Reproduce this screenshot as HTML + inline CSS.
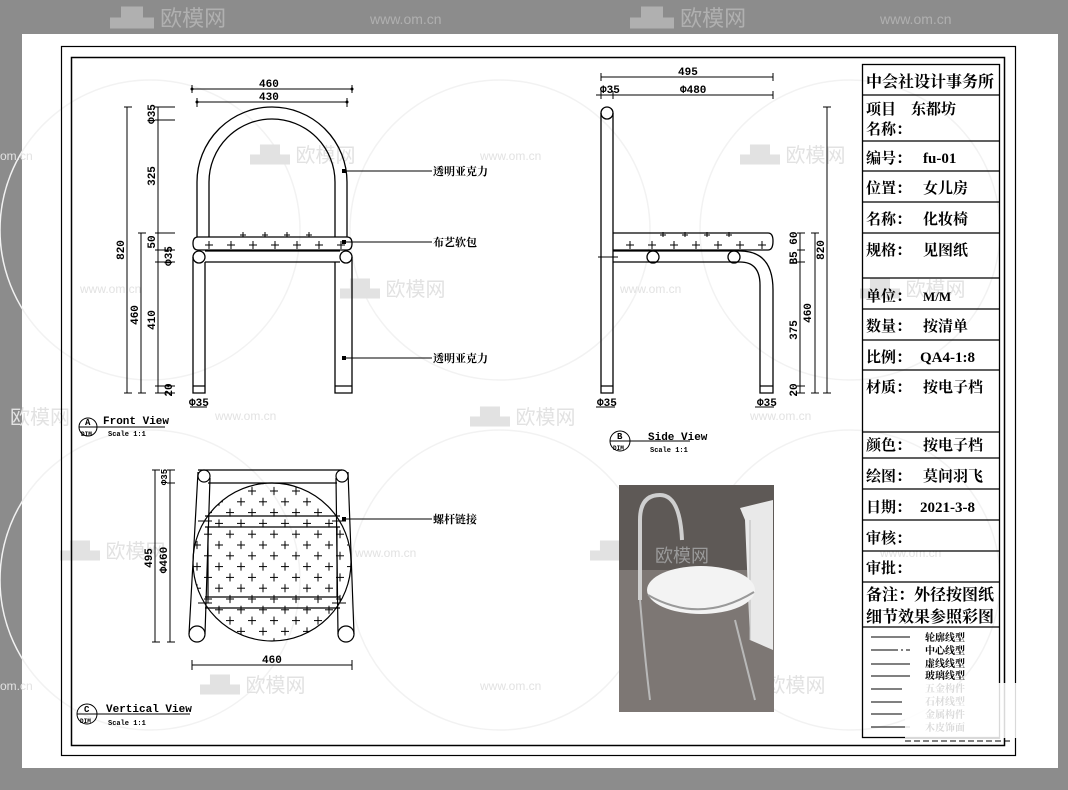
<!DOCTYPE html>
<html><head><meta charset="utf-8"><style>
html,body{margin:0;padding:0;background:#8c8c8c;width:1068px;height:790px;overflow:hidden}
svg{display:block}
.cn{font-family:"Liberation Serif","Noto Serif CJK SC",serif;font-weight:bold;font-size:15px;fill:#000}
.m{font-family:"Liberation Mono","Noto Sans CJK SC",monospace;font-weight:bold;fill:#000}
.wm{font-family:"Liberation Sans","Noto Sans CJK SC",sans-serif;fill:#e2e2e2}
</style></head><body>
<svg width="1068" height="790" viewBox="0 0 1068 790" xmlns="http://www.w3.org/2000/svg">
<defs>
<pattern id="cr" x="252" y="491" width="22" height="21.6" patternUnits="userSpaceOnUse">
<path d="M-4,0H4M0,-4V4M18,0H26M22,-4V4M7,10.8H15M11,6.8V14.8M18,21.6H26M22,17.6V25.6M-4,21.6H4M0,17.6V25.6" stroke="#000" stroke-width="1"/>
</pattern>
<clipPath id="cc"><circle cx="272" cy="562" r="79"/></clipPath>
</defs>
<rect width="1068" height="790" fill="#8c8c8c"/>
<g class="wm" style="fill:#b0b0b0;font-size:22px">
<text x="110" y="26">▟▙ 欧模网</text><text x="370" y="24" style="font-size:14px">www.om.cn</text>
<text x="630" y="26">▟▙ 欧模网</text><text x="880" y="24" style="font-size:14px">www.om.cn</text>
</g>
<rect x="22" y="34" width="1036" height="734" fill="#fff"/>
<g fill="none" stroke="#f2f2f2" stroke-width="1.5">
<circle cx="150" cy="230" r="150"/><circle cx="500" cy="230" r="150"/><circle cx="850" cy="230" r="150"/>
<circle cx="150" cy="580" r="150"/><circle cx="500" cy="580" r="150"/><circle cx="850" cy="580" r="150"/>
</g>
<g class="wm" style="font-size:20px">
<text x="250" y="162">▟▙ 欧模网</text><text x="740" y="162">▟▙ 欧模网</text>
<text x="340" y="296">▟▙ 欧模网</text><text x="860" y="296">▟▙ 欧模网</text>
<text x="470" y="424">▟▙ 欧模网</text><text x="10" y="424">欧模网</text>
<text x="60" y="558">▟▙ 欧模网</text><text x="590" y="558">▟▙ 欧模网</text>
<text x="200" y="692">▟▙ 欧模网</text><text x="720" y="692">▟▙ 欧模网</text>
</g>
<g class="wm" style="font-size:12px"><text x="0" y="160">om.cn</text><text x="480" y="160">www.om.cn</text>
<text x="80" y="293">www.om.cn</text><text x="620" y="293">www.om.cn</text>
<text x="215" y="420">www.om.cn</text><text x="750" y="420">www.om.cn</text>
<text x="355" y="557">www.om.cn</text><text x="880" y="557">www.om.cn</text>
<text x="0" y="690">om.cn</text><text x="480" y="690">www.om.cn</text></g>
<g fill="none" stroke="#000">
<rect x="61.5" y="46.5" width="954" height="709" stroke-width="1.2"/>
<rect x="71.5" y="57.5" width="933" height="688" stroke-width="1.5"/>
</g>
<g fill="none" stroke="#000" stroke-width="1.3">
<rect x="862.5" y="64.5" width="137" height="673"/>
<path d="M862 95H999M862 141H999M862 171H999M862 202H999M862 233H999M862 278H999M862 309H999M862 340H999M862 370H999M862 432H999M862 458H999M862 489H999M862 520H999M862 551H999M862 582H999M862 627H999"/>
</g>
<g class="cn">
<text x="866" y="87" style="font-size:16px">中会社设计事务所</text>
<text x="866" y="114">项目　东都坊</text><text x="866" y="134">名称：</text>
<text x="866" y="163">编号：</text><text x="923" y="163">fu-01</text>
<text x="866" y="193">位置：</text><text x="923" y="193">女儿房</text>
<text x="866" y="224">名称：</text><text x="923" y="224">化妆椅</text>
<text x="866" y="255">规格：</text><text x="923" y="255">见图纸</text>
<text x="866" y="301">单位：</text><text x="923" y="301" style="font-size:13px">M/M</text>
<text x="866" y="331">数量：</text><text x="923" y="331">按清单</text>
<text x="866" y="362">比例：</text><text x="920" y="362">QA4-1:8</text>
<text x="866" y="392">材质：</text><text x="923" y="392">按电子档</text>
<text x="866" y="450">颜色：</text><text x="923" y="450">按电子档</text>
<text x="866" y="481">绘图：</text><text x="923" y="481">莫问羽飞</text>
<text x="866" y="512">日期：</text><text x="920" y="512">2021-3-8</text>
<text x="866" y="543">审核：</text>
<text x="866" y="573">审批：</text>
<text x="866" y="600" style="font-size:16px">备注：外径按图纸</text>
<text x="866" y="622" style="font-size:16px">细节效果参照彩图</text>
</g>
<g stroke="#000" stroke-width="1">
<path d="M871 637H910M871 650H898M901 650H903M906 650H910M871 664H910M871 676H910M871 689H902M871 702H902M871 714H902M871 727H910"/>
</g>
<g class="cn" style="font-size:10px">
<text x="925" y="641">轮廓线型</text><text x="925" y="654">中心线型</text><text x="925" y="667">虚线线型</text>
<text x="925" y="679">玻璃线型</text><text x="925" y="692">五金构件</text><text x="925" y="705">石材线型</text>
<text x="925" y="718">金属构件</text><text x="925" y="731">木皮饰面</text>
</g>
<rect x="905" y="683" width="118" height="55" fill="#fff" opacity="0.85"/>
<path d="M905 741H1010" stroke="#000" stroke-dasharray="6,3" fill="none"/>

<!-- FRONT VIEW -->
<g fill="none" stroke="#000" stroke-width="1.3">
<path d="M197,237V182A75,75 0 0 1 347,182V237"/>
<path d="M209,237V182A63,63 0 0 1 335,182V237"/>
<path d="M197,237H347Q352,237 352,243.5Q352,250 347,250H198Q193,250 193,243.5Q193,237 198,237Z"/>
<circle cx="199" cy="257" r="6"/><circle cx="346" cy="257" r="6"/>
<path d="M205,251H340M205,262H340"/>
<path d="M193,257V393H205V262M193,386H205M352,257V393H335V262M335,386H352"/>
</g>
<g stroke="#000" stroke-width="1" fill="none">
<path d="M205,245h8M209,241v8M227,245h8M231,241v8M249,245h8M253,241v8M271,245h8M275,241v8M293,245h8M297,241v8M315,245h8M319,241v8M337,245h8M341,241v8"/>
<path d="M240,235h6M243,232v5M262,235h6M265,232v5M284,235h6M287,232v5M306,235h6M309,232v5"/>
<path d="M192,89H352M192,85v8M352,85v8M197,102H347M197,98v9M347,98v9"/>
<path d="M127,107V393M141,233V393M158,107V393M124,107h8M124,393h8M138,233h8M138,393h8M155,107h20M155,120h20M155,233h20M155,250h20M155,262h20M155,386h20M155,393h20"/>
<path d="M344,171H432M344,242H432M344,358H432M190,407H207"/>
</g>
<g fill="#000"><rect x="342" y="169" width="4" height="4"/><rect x="342" y="240" width="4" height="4"/><rect x="342" y="356" width="4" height="4"/>
<circle cx="192" cy="89" r="1.5"/><circle cx="352" cy="89" r="1.5"/><circle cx="197" cy="102" r="1.5"/><circle cx="347" cy="102" r="1.5"/></g>
<g class="m" style="font-size:11px">
<text x="259" y="87">460</text><text x="259" y="100">430</text>
<text transform="translate(124,250) rotate(-90)" text-anchor="middle">820</text>
<text transform="translate(138,315) rotate(-90)" text-anchor="middle">460</text>
<text transform="translate(155,114) rotate(-90)" text-anchor="middle">Φ35</text>
<text transform="translate(155,176) rotate(-90)" text-anchor="middle">325</text>
<text transform="translate(155,242) rotate(-90)" text-anchor="middle">50</text>
<text transform="translate(155,320) rotate(-90)" text-anchor="middle">410</text>
<text transform="translate(172,256) rotate(-90)" text-anchor="middle">Φ35</text>
<text transform="translate(172,390) rotate(-90)" text-anchor="middle">20</text>
<text x="189" y="406">Φ35</text>
</g>
<g class="cn" style="font-size:11px"><text x="433" y="175">透明亚克力</text><text x="433" y="246">布艺软包</text><text x="433" y="362">透明亚克力</text></g>
<g fill="none" stroke="#000"><circle cx="88" cy="427" r="9"/><path d="M79,427H165"/></g>
<g class="m"><text x="85" y="425" style="font-size:9px">A</text><text x="81" y="436" style="font-size:6px">DIM</text>
<text x="103" y="424" style="font-size:11px">Front View</text><text x="108" y="436" style="font-size:7px">Scale 1:1</text></g>

<!-- SIDE VIEW -->
<g fill="none" stroke="#000" stroke-width="1.3">
<circle cx="607" cy="113" r="6"/>
<path d="M601,113V393H613V113M601,386H613"/>
<path d="M613,233H768Q773,233 773,241Q773,250 768,250H613"/>
<path d="M613,251H740Q773,251 773,290V393H760V285Q760,262 740,262H613M760,386H773"/>
<circle cx="653" cy="257" r="6"/><circle cx="734" cy="257" r="6"/>
</g>
<g stroke="#000" stroke-width="1" fill="none">
<path d="M626,245h8M630,241v8M648,245h8M652,241v8M670,245h8M674,241v8M692,245h8M696,241v8M714,245h8M718,241v8M736,245h8M740,241v8M758,245h8M762,241v8"/>
<path d="M660,235h6M663,232v5M682,235h6M685,232v5M704,235h6M707,232v5M726,235h6M729,232v5"/>
<path d="M598,257H618M601,77H773M601,73v8M773,73v8M596,95H773M601,91v8M613,91v8M773,91v8"/>
<path d="M827,107V393M815,233V393M800,233V393M823,107h8M823,393h8M811,233h8M811,393h8M797,233h8M797,250h8M797,262h8M797,386h8M797,393h8M596,407H615M755,407H774"/>
</g>
<g class="m" style="font-size:11px">
<text x="678" y="75">495</text><text x="600" y="93">Φ35</text><text x="680" y="93">Φ480</text>
<text transform="translate(824,250) rotate(-90)" text-anchor="middle">820</text>
<text transform="translate(811,313) rotate(-90)" text-anchor="middle">460</text>
<text transform="translate(797,330) rotate(-90)" text-anchor="middle">375</text>
<text transform="translate(797,248) rotate(-90)" text-anchor="middle">B5 60</text>
<text transform="translate(797,390) rotate(-90)" text-anchor="middle">20</text>
<text x="597" y="406">Φ35</text><text x="757" y="406">Φ35</text>
</g>
<g fill="none" stroke="#000"><circle cx="620" cy="441" r="10"/><path d="M610,441H690"/></g>
<g class="m"><text x="617" y="439" style="font-size:9px">B</text><text x="613" y="450" style="font-size:6px">DIM</text>
<text x="648" y="440" style="font-size:11px">Side View</text><text x="650" y="452" style="font-size:7px">Scale 1:1</text></g>

<!-- VERTICAL VIEW -->
<g fill="none" stroke="#000" stroke-width="1.2">
<circle cx="272" cy="562" r="79"/>
<path d="M198,470H342M208,483H337"/>
<circle cx="204" cy="476" r="6"/><circle cx="342" cy="476" r="6"/>
<circle cx="197" cy="634" r="8"/><circle cx="346" cy="634" r="8"/>
<path d="M198,472L189,634M210,478L205,634M336,478L338,634M348,472L354,634"/>
<path d="M205,516H340M205,527H340M205,597H340M205,608H340M208,527V597M337,527V597"/>
</g>
<rect x="193" y="483" width="158" height="160" fill="url(#cr)" clip-path="url(#cc)"/>
<g stroke="#000" stroke-width="1" fill="none">
<path d="M198,521h14M198,603h14M332,521h14M332,603h14"/>
<path d="M155,470V642M170,470V642M152,470h8M152,642h8M167,470h8M167,483h8M167,642h8M192,665H352M192,660v10M352,660v10M345,519H432"/>
</g>
<g fill="#000"><rect x="342" y="517" width="4" height="4"/></g>
<g class="m" style="font-size:11px">
<text x="262" y="663">460</text>
<text transform="translate(152,558) rotate(-90)" text-anchor="middle">495</text>
<text transform="translate(167,560) rotate(-90)" text-anchor="middle">Φ460</text>
<text transform="translate(167,477) rotate(-90)" text-anchor="middle" style="font-size:9px">Φ35</text>
</g>
<text class="cn" x="433" y="523" style="font-size:11px">螺杆链接</text>
<g fill="none" stroke="#000"><circle cx="87" cy="714" r="10"/><path d="M77,714H190"/></g>
<g class="m"><text x="84" y="712" style="font-size:9px">C</text><text x="80" y="723" style="font-size:6px">DIM</text>
<text x="106" y="712" style="font-size:11px">Vertical View</text><text x="108" y="725" style="font-size:7px">Scale 1:1</text></g>

<!-- PHOTO -->
<rect x="619" y="485" width="155" height="227" fill="#5e5956"/>
<rect x="619" y="570" width="155" height="142" fill="#7d7774"/>
<path d="M740,508L773,500V650L750,640L745,520Z" fill="#e9e9e9"/>
<path d="M750,520V640" stroke="#bbb"/>
<path d="M640,600V520Q640,495 660,495Q680,495 682,540" fill="none" stroke="#cfcfcf" stroke-width="4"/>
<path d="M640,600Q645,660 650,700M735,620Q750,680 755,700" fill="none" stroke="#b8b8b8" stroke-width="2"/>
<ellipse cx="701" cy="590" rx="54" ry="24" fill="#f3f3f3"/>
<path d="M648,595Q700,625 754,592" fill="none" stroke="#999" stroke-width="2"/>
<text x="655" y="562" style="font-family:'Liberation Sans','Noto Sans CJK SC',sans-serif;font-size:18px;fill:#9a9a9a">欧模网</text>
</svg>
</body></html>
